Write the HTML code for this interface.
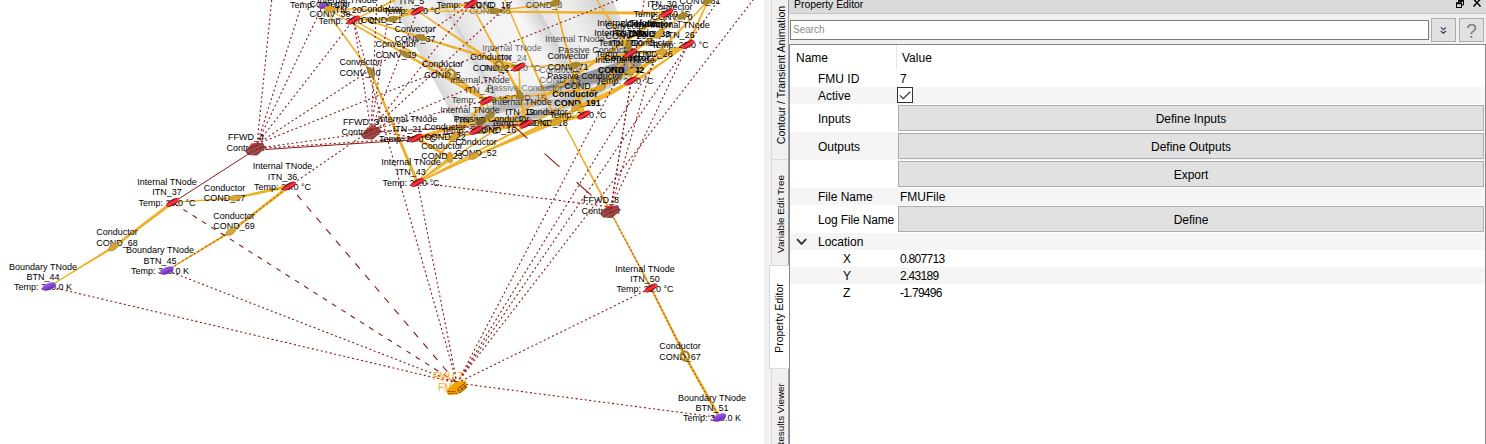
<!DOCTYPE html>
<html><head><meta charset="utf-8">
<style>
html,body{margin:0;padding:0;}
body{width:1486px;height:444px;overflow:hidden;background:#f0f0f0;position:relative;font-family:"Liberation Sans",sans-serif;font-size:12px;color:#000;}
#view{position:absolute;left:0;top:0;width:764px;height:444px;background:#fff;overflow:hidden;}
#view svg{position:absolute;left:0;top:0;}
#tabs{position:absolute;left:764px;top:0;width:25px;height:444px;background:#f0f0f0;}
.tab{position:absolute;left:7px;width:17px;background:#f0f0f0;border-top:1px solid #d9d9d9;border-left:1px solid #d9d9d9;box-sizing:border-box;}
.tab.act{left:5px;width:20px;background:#fff;border:1px solid #d9d9d9;border-right:none;z-index:3;}
.tab span{position:absolute;left:calc(50% - 0.5px);top:50%;white-space:nowrap;transform:translate(-50%,-50%) rotate(-90deg);font-size:10.4px;}
#panel{position:absolute;left:789px;top:0;width:697px;height:444px;background:#f0f0f0;}
#vline{position:absolute;left:788px;top:0;width:1px;height:444px;background:#a0a0a0;}
#title{position:absolute;left:0;top:0;width:697px;height:14px;background:#dadada;border-bottom:1px solid #c4c4c4;box-sizing:border-box;}
#title span{position:absolute;left:5px;top:-1px;font-size:10.4px;}
#search{position:absolute;left:1px;top:20px;width:639px;height:20px;box-sizing:border-box;background:#fff;border:1px solid #7a7a7a;}
#search span{position:absolute;left:2px;top:3px;font-size:10px;color:#8a8a8a;}
.tb{position:absolute;top:18px;width:25px;height:24px;box-sizing:border-box;background:#e1e1e1;border:1px solid #adadad;}
#tree{position:absolute;left:0;top:44px;width:697px;height:400px;background:#fff;border:1px solid #828790;border-bottom:none;box-sizing:border-box;}
.row{position:absolute;left:0;width:695px;}
.row.alt{background:#f5f5f5;}
.row .n{position:absolute;top:50%;transform:translateY(-50%);white-space:nowrap;}
.btn{position:absolute;left:108px;width:586px;box-sizing:border-box;background:#e1e1e1;border:1px solid #adadad;text-align:center;}
</style></head><body>
<div id="view">
<svg width="764" height="444" viewBox="0 0 764 444">
<defs>
<linearGradient id="cy1" x1="0" x2="1" y1="0" y2="0"><stop offset="0" stop-color="#d6d6d6"/><stop offset="0.5" stop-color="#f7f7f7"/><stop offset="0.85" stop-color="#ececec"/><stop offset="1" stop-color="#cdcdcd"/></linearGradient>
<linearGradient id="cy2" x1="0" x2="1" y1="0" y2="0"><stop offset="0" stop-color="#e2e2e2"/><stop offset="0.3" stop-color="#f2f2f2"/><stop offset="0.75" stop-color="#f6f6f6"/><stop offset="1" stop-color="#cfcfcf"/></linearGradient>
<linearGradient id="cy3" x1="0" x2="1" y1="0" y2="0"><stop offset="0" stop-color="#e6e6e6"/><stop offset="0.35" stop-color="#efefef"/><stop offset="0.8" stop-color="#d2d2d2"/><stop offset="1" stop-color="#e4e4e4"/></linearGradient>
<linearGradient id="red" x1="0" x2="0" y1="0" y2="1"><stop offset="0" stop-color="#2a0000"/><stop offset="0.3" stop-color="#e8202c"/><stop offset="0.55" stop-color="#ff3a48"/><stop offset="1" stop-color="#7a0814"/></linearGradient>
<linearGradient id="pur" x1="0" x2="0" y1="0" y2="1"><stop offset="0" stop-color="#a060f0"/><stop offset="1" stop-color="#6a28b0"/></linearGradient>
<clipPath id="cyclip"><path d="M390 -2 L612 -2 L641 68 Q600 97 560 112 Q515 127 476 131.5 L456 122 Z"/></clipPath>
</defs>
<g clip-path="url(#cyclip)"><g transform="matrix(1 0 0.55 1 0 0)">
<rect x="388" y="-5" width="56" height="160" fill="url(#cy1)"/>
<rect x="444" y="-5" width="90" height="160" fill="url(#cy2)"/>
<rect x="534" y="-5" width="80" height="160" fill="url(#cy3)"/>
</g></g>
<path d="M462 116 L545 84 L640 56 L642 68 Q600 97 560 112 Q515 127 476 131.5 L458 123 Z" fill="#c2c2c2" opacity="0.75"/>
<path d="M538 89 L600 68 L640 56 L642 68 L610 80 L570 88 Z" fill="#868686" opacity="0.75"/>
<path d="M478 120 L604 82 L607 89 L482 125 Z" fill="#f4f4f4" opacity="0.8"/>
<path d="M486 108 L560 98 L596 88 L598 94 L560 104 L488 112 Z" fill="#a8a8a8" opacity="0.6"/>
<path d="M470 125 L556 108 L559 113 L476 131 Z" fill="#a4a4a4" opacity="0.6"/>
<path d="M49.3 287.1 L114.1 248.0 L112.9 246.0 L48.7 285.9 Z" fill="#eeb02a"/>
<path d="M114.2 247.9 L173.5 203.8 L171.5 201.2 L112.8 246.1 Z" fill="#eeb02a"/>
<path d="M172.5 203.1 L235.1 199.1 L234.9 196.9 L172.5 201.9 Z" fill="#eeb02a"/>
<path d="M235.2 199.1 L289.8 187.6 L289.2 184.4 L234.8 196.9 Z" fill="#eeb02a"/>
<path d="M167.3 271.1 L231.6 232.5 L230.4 230.5 L166.7 269.9 Z" fill="#eeb02a"/>
<path d="M231.7 232.4 L290.5 187.3 L288.5 184.7 L230.3 230.6 Z" fill="#eeb02a"/>
<path d="M609.4 211.3 L650.1 288.5 L651.9 287.5 L610.6 210.7 Z" fill="#eeb02a"/>
<path d="M650.1 288.4 L683.8 356.6 L686.2 355.4 L651.9 287.6 Z" fill="#eeb02a"/>
<path d="M683.9 356.6 L718.1 418.3 L720.9 416.7 L686.1 355.4 Z" fill="#eeb02a"/>
<path d="M322.0 6.4 L370.2 73.1 L371.8 71.9 L323.0 5.6 Z" fill="#eeb02a"/>
<path d="M370.0 72.9 L416.0 183.1 L419.0 181.9 L372.0 72.1 Z" fill="#eeb02a"/>
<path d="M322.2 6.6 L404.4 55.0 L405.6 53.0 L322.8 5.4 Z" fill="#eeb02a"/>
<path d="M404.4 55.0 L485.7 101.9 L487.3 99.1 L405.6 53.0 Z" fill="#eeb02a"/>
<path d="M322.3 6.6 L420.7 38.6 L421.3 36.4 L322.7 5.4 Z" fill="#eeb02a"/>
<path d="M420.7 38.6 L518.5 68.5 L519.5 65.5 L421.3 36.4 Z" fill="#eeb02a"/>
<path d="M353.5 20.6 L392.5 20.2 L392.5 17.8 L353.5 19.4 Z" fill="#eeb02a"/>
<path d="M392.9 20.2 L418.0 12.5 L417.0 9.5 L392.1 17.8 Z" fill="#eeb02a"/>
<path d="M322.3 6.6 L329.2 9.5 L329.8 8.1 L322.7 5.4 Z" fill="#eeb02a"/>
<path d="M329.5 9.5 L417.5 12.6 L417.5 9.4 L329.5 8.1 Z" fill="#eeb02a"/>
<path d="M353.2 20.6 L450.4 75.2 L451.6 72.8 L353.8 19.4 Z" fill="#eeb02a"/>
<path d="M450.2 75.1 L485.5 101.8 L487.5 99.2 L451.8 72.9 Z" fill="#eeb02a"/>
<path d="M417.1 11.5 L498.2 67.2 L499.8 64.8 L417.9 10.5 Z" fill="#eeb02a"/>
<path d="M498.9 67.4 L518.9 68.6 L519.1 65.4 L499.1 64.6 Z" fill="#eeb02a"/>
<path d="M417.5 11.6 L632.0 14.5 L632.0 11.5 L417.5 10.4 Z" fill="#eeb02a"/>
<path d="M632.0 14.5 L667.0 14.6 L667.0 11.4 L632.0 11.5 Z" fill="#eeb02a"/>
<path d="M470.8 4.6 L494.8 11.7 L495.2 10.3 L471.2 3.4 Z" fill="#eeb02a"/>
<path d="M495.1 11.7 L555.1 4.0 L554.9 2.0 L494.9 10.3 Z" fill="#eeb02a"/>
<path d="M417.6 11.6 L471.2 5.6 L470.8 2.4 L417.4 10.4 Z" fill="#eeb02a"/>
<path d="M470.4 4.3 L518.8 95.7 L521.2 94.3 L471.6 3.7 Z" fill="#eeb02a"/>
<path d="M518.6 95.3 L524.4 124.3 L527.6 123.7 L521.4 94.7 Z" fill="#eeb02a"/>
<path d="M554.4 3.2 L582.5 115.4 L585.5 114.6 L555.6 2.8 Z" fill="#eeb02a"/>
<path d="M596.5 0.3 L629.1 53.9 L631.9 52.1 L597.5 -0.3 Z" fill="#eeb02a"/>
<path d="M707.5 0.5 L629.8 79.9 L632.2 82.1 L708.5 1.5 Z" fill="#eeb02a"/>
<path d="M682.1 15.5 L629.6 51.7 L631.4 54.3 L682.9 16.5 Z" fill="#eeb02a"/>
<path d="M687.8 43.9 L660.7 50.9 L661.3 53.1 L688.2 45.1 Z" fill="#eeb02a"/>
<path d="M661.0 50.9 L630.4 51.4 L630.6 54.6 L661.0 53.1 Z" fill="#eeb02a"/>
<path d="M687.6 44.0 L639.2 76.8 L640.8 79.2 L688.4 45.0 Z" fill="#eeb02a"/>
<path d="M639.5 76.6 L630.5 79.5 L631.5 82.5 L640.5 79.4 Z" fill="#eeb02a"/>
<path d="M630.7 80.4 L575.4 106.2 L576.6 108.8 L631.3 81.6 Z" fill="#eeb02a"/>
<path d="M575.0 108.6 L582.9 116.2 L585.1 113.8 L577.0 106.4 Z" fill="#eeb02a"/>
<path d="M519.0 67.6 L575.5 66.1 L575.5 63.9 L519.0 66.4 Z" fill="#eeb02a"/>
<path d="M575.7 66.1 L630.8 54.6 L630.2 51.4 L575.3 63.9 Z" fill="#eeb02a"/>
<path d="M486.6 101.1 L600.1 89.3 L599.9 86.7 L486.4 99.9 Z" fill="#eeb02a"/>
<path d="M601.0 88.9 L631.7 54.1 L629.3 51.9 L599.0 87.1 Z" fill="#eeb02a"/>
<path d="M485.9 100.6 L488.7 116.2 L490.3 115.8 L487.1 100.4 Z" fill="#eeb02a"/>
<path d="M489.3 115.2 L415.5 136.5 L416.5 139.5 L489.7 116.8 Z" fill="#eeb02a"/>
<path d="M417.9 183.0 L450.7 158.4 L449.3 156.6 L417.1 182.0 Z" fill="#eeb02a"/>
<path d="M450.6 156.5 L416.8 136.6 L415.2 139.4 L449.4 158.5 Z" fill="#eeb02a"/>
<path d="M417.8 183.1 L474.4 156.9 L473.6 155.1 L417.2 181.9 Z" fill="#eeb02a"/>
<path d="M474.4 156.9 L556.5 123.8 L555.5 121.2 L473.6 155.1 Z" fill="#eeb02a"/>
<path d="M556.4 123.9 L584.4 116.5 L583.6 113.5 L555.6 121.1 Z" fill="#eeb02a"/>
<path d="M417.8 183.1 L610.6 95.4 L609.4 92.6 L417.2 181.9 Z" fill="#eeb02a"/>
<path d="M610.8 95.3 L631.8 82.4 L630.2 79.6 L609.2 92.7 Z" fill="#eeb02a"/>
<path d="M418.0 182.9 L454.9 137.7 L453.1 136.3 L417.0 182.1 Z" fill="#eeb02a"/>
<path d="M454.9 137.8 L487.7 101.6 L485.3 99.4 L453.1 136.2 Z" fill="#eeb02a"/>
<path d="M526.0 124.6 L556.0 123.5 L556.0 121.5 L526.0 123.4 Z" fill="#eeb02a"/>
<path d="M561.4 120.3 L609.1 211.5 L610.9 210.5 L562.6 119.7 Z" fill="#eeb02a"/>
<path d="M416.0 138.6 L454.0 138.0 L454.0 136.0 L416.0 137.4 Z" fill="#eeb02a"/>
<path d="M454.2 138.0 L526.3 125.6 L525.7 122.4 L453.8 136.0 Z" fill="#eeb02a"/>
<path d="M666.9 13.6 L682.3 17.0 L682.7 15.0 L667.1 12.4 Z" fill="#eeb02a"/>
<path d="M417.9 183.0 L667.9 14.3 L666.1 11.7 L417.1 182.0 Z" fill="#eeb02a"/>
<path d="M417.8 183.1 L632.6 72.2 L631.4 69.8 L417.2 181.9 Z" fill="#eeb02a"/>
<path d="M632.6 72.3 L688.7 45.9 L687.3 43.1 L631.4 69.7 Z" fill="#eeb02a"/>
<path d="M666.4 12.8 L658.0 33.6 L660.0 34.4 L667.6 13.2 Z" fill="#eeb02a"/>
<path d="M658.4 33.1 L629.6 51.7 L631.4 54.3 L659.6 34.9 Z" fill="#eeb02a"/>
<path d="M707.4 0.7 L688.6 39.4 L691.4 40.6 L708.6 1.3 Z" fill="#eeb02a"/>
<path d="M688.6 39.4 L686.5 43.9 L689.5 45.1 L691.4 40.6 Z" fill="#eeb02a"/>
<path d="M631.6 81.1 L632.8 71.1 L631.2 70.9 L630.4 80.9 Z" fill="#eeb02a"/>
<path d="M632.3 71.7 L688.7 45.9 L687.3 43.1 L631.7 70.3 Z" fill="#eeb02a"/>
<path d="M353.8 20.6 L395.4 0.9 L394.6 -0.9 L353.2 19.4 Z" fill="#eeb02a"/>
<path d="M518.4 67.0 L518.9 95.0 L521.1 95.0 L519.6 67.0 Z" fill="#eeb02a"/>
<path d="M519.8 93.9 L486.2 98.9 L486.8 102.1 L520.2 96.1 Z" fill="#eeb02a"/>
<path d="M526.1 124.6 L584.2 116.6 L583.8 113.4 L525.9 123.4 Z" fill="#eeb02a"/>
<path d="M631.1 52.8 L629.3 45.8 L627.7 46.2 L629.9 53.2 Z" fill="#eeb02a"/>
<path d="M627.7 46.1 L629.4 81.1 L632.6 80.9 L629.3 45.9 Z" fill="#eeb02a"/>
<path d="M504.4 0.3 L551.1 111.4 L552.9 110.6 L505.6 -0.3 Z" fill="#eeb02a"/>
<path d="M551.1 111.3 L555.1 122.8 L556.9 122.2 L552.9 110.7 Z" fill="#eeb02a"/>
<path d="M416.2 138.6 L500.3 119.3 L499.7 116.7 L415.8 137.4 Z" fill="#eeb02a"/>
<path d="M499.7 119.3 L525.6 125.6 L526.4 122.4 L500.3 116.7 Z" fill="#eeb02a"/>
<line x1="457" y1="383" x2="49" y2="286.5" stroke="#8e1616" stroke-width="1.1" stroke-dasharray="2 2.6"/>
<line x1="457" y1="383" x2="167" y2="270.5" stroke="#8e1616" stroke-width="1.1" stroke-dasharray="2 2.6"/>
<line x1="457" y1="383" x2="417.5" y2="182.5" stroke="#8e1616" stroke-width="1.1" stroke-dasharray="2 2.6"/>
<line x1="457" y1="383" x2="353.5" y2="20" stroke="#8e1616" stroke-width="1.1" stroke-dasharray="2 2.6"/>
<line x1="457" y1="383" x2="630.5" y2="53" stroke="#8e1616" stroke-width="1.1" stroke-dasharray="2 2.6"/>
<line x1="457" y1="383" x2="651" y2="288" stroke="#8e1616" stroke-width="1.1" stroke-dasharray="2 2.6"/>
<line x1="457" y1="383" x2="719.5" y2="417.5" stroke="#8e1616" stroke-width="1.1" stroke-dasharray="2 2.6"/>
<line x1="457" y1="383" x2="661" y2="52" stroke="#8e1616" stroke-width="1.1" stroke-dasharray="2 2.6"/>
<line x1="457" y1="383" x2="760" y2="-9" stroke="#8e1616" stroke-width="1.1" stroke-dasharray="2 2.6"/>
<line x1="457" y1="383" x2="724.5" y2="-9" stroke="#8e1616" stroke-width="1.1" stroke-dasharray="2 2.6"/>
<line x1="457" y1="383" x2="172.5" y2="202.5" stroke="#8e1616" stroke-width="1.1" stroke-dasharray="5 6"/>
<line x1="457" y1="383" x2="289.5" y2="186" stroke="#8e1616" stroke-width="1.1" stroke-dasharray="7 8"/>
<line x1="611" y1="207" x2="631" y2="81" stroke="#8e1616" stroke-width="1.1" stroke-dasharray="2 2.6"/>
<line x1="611" y1="207" x2="667" y2="13" stroke="#8e1616" stroke-width="1.1" stroke-dasharray="2 2.6"/>
<line x1="611" y1="207" x2="688" y2="44.5" stroke="#8e1616" stroke-width="1.1" stroke-dasharray="2 2.6"/>
<line x1="611" y1="207" x2="417.5" y2="182.5" stroke="#8e1616" stroke-width="1.1" stroke-dasharray="2 2.6"/>
<line x1="611" y1="207" x2="645" y2="-5" stroke="#8e1616" stroke-width="1.1" stroke-dasharray="2 2.6"/>
<line x1="512.5" y1="125" x2="601" y2="204" stroke="#8e1616" stroke-width="1.1" stroke-dasharray="20 23"/>
<line x1="610" y1="211" x2="651" y2="288" stroke="#8e1616" stroke-width="0.9" stroke-dasharray="1.5 2.5"/>
<line x1="651" y1="288" x2="685" y2="356" stroke="#8e1616" stroke-width="0.9" stroke-dasharray="1.5 2.5"/>
<line x1="685" y1="356" x2="719.5" y2="417.5" stroke="#8e1616" stroke-width="0.9" stroke-dasharray="1.5 2.5"/>
<line x1="167" y1="270.5" x2="231" y2="231.5" stroke="#8e1616" stroke-width="0.9" stroke-dasharray="1.5 3"/>
<line x1="231" y1="231.5" x2="289.5" y2="186" stroke="#8e1616" stroke-width="0.9" stroke-dasharray="1.5 3"/>
<line x1="257" y1="144" x2="272" y2="-3" stroke="#8e1616" stroke-width="1.1" stroke-dasharray="2 2.6"/>
<line x1="257" y1="144" x2="304" y2="-3" stroke="#8e1616" stroke-width="1.1" stroke-dasharray="2 2.6"/>
<line x1="257" y1="144" x2="322.5" y2="6" stroke="#8e1616" stroke-width="1.1" stroke-dasharray="2 2.6"/>
<line x1="257" y1="144" x2="353.5" y2="20" stroke="#8e1616" stroke-width="1.1" stroke-dasharray="2 2.6"/>
<line x1="257" y1="144" x2="471" y2="4" stroke="#8e1616" stroke-width="1.1" stroke-dasharray="2 2.6"/>
<line x1="257" y1="144" x2="625" y2="-3" stroke="#8e1616" stroke-width="1.1" stroke-dasharray="2 2.6"/>
<line x1="265" y1="148" x2="416" y2="138" stroke="#8e1616" stroke-width="1.1" stroke-dasharray="2 2.6"/>
<line x1="265" y1="149.5" x2="410" y2="140" stroke="#8e1616" stroke-width="1"/>
<line x1="250" y1="153" x2="177" y2="200" stroke="#8e1616" stroke-width="1"/>
<line x1="371" y1="130" x2="289.5" y2="186" stroke="#8e1616" stroke-width="1.1" stroke-dasharray="2 2.6"/>
<line x1="371" y1="130" x2="471" y2="4" stroke="#8e1616" stroke-width="1.1" stroke-dasharray="2 2.6"/>
<line x1="371" y1="130" x2="391" y2="-3" stroke="#8e1616" stroke-width="1.1" stroke-dasharray="2 2.6"/>
<line x1="371" y1="130" x2="377" y2="-3" stroke="#8e1616" stroke-width="1.1" stroke-dasharray="2 2.6"/>
<line x1="371" y1="130" x2="353.5" y2="20" stroke="#8e1616" stroke-width="1.1" stroke-dasharray="2 2.6"/>
<line x1="371" y1="130" x2="417.5" y2="11" stroke="#8e1616" stroke-width="1.1" stroke-dasharray="2 2.6"/>
<line x1="371" y1="130" x2="486.5" y2="100.5" stroke="#8e1616" stroke-width="1.1" stroke-dasharray="2 2.6"/>
<line x1="371" y1="130" x2="519" y2="67" stroke="#8e1616" stroke-width="1.1" stroke-dasharray="2 2.6"/>
<line x1="371" y1="130" x2="517" y2="-3" stroke="#8e1616" stroke-width="1.1" stroke-dasharray="2 2.6"/>
<line x1="371" y1="130" x2="416" y2="138" stroke="#8e1616" stroke-width="1.1" stroke-dasharray="2 2.6"/>
<line x1="371" y1="132.5" x2="255" y2="148.5" stroke="#8e1616" stroke-width="1.1" stroke-dasharray="2 2.6"/>
<line x1="380" y1="131.5" x2="526" y2="124" stroke="#8e1616" stroke-width="1.1" stroke-dasharray="5 2"/>
<line x1="380" y1="140.5" x2="476" y2="131" stroke="#8e1616" stroke-width="1.1" stroke-dasharray="5 2"/>
<line x1="416" y1="138" x2="526" y2="124" stroke="#8e1616" stroke-width="1.1" stroke-dasharray="2 2.6"/>
<g font-family="Liberation Sans, sans-serif" font-size="9px">
<text x="43" y="269.5" text-anchor="middle" fill="#000">Boundary TNode</text>
<text x="43" y="279.8" text-anchor="middle" fill="#000">BTN_44</text>
<text x="43" y="290.1" text-anchor="middle" fill="#000">Temp: 300.0 K</text>
<text x="160" y="253.2" text-anchor="middle" fill="#000">Boundary TNode</text>
<text x="160" y="263.5" text-anchor="middle" fill="#000">BTN_45</text>
<text x="160" y="273.8" text-anchor="middle" fill="#000">Temp: 300.0 K</text>
<text x="712" y="400.5" text-anchor="middle" fill="#000">Boundary TNode</text>
<text x="712" y="410.8" text-anchor="middle" fill="#000">BTN_51</text>
<text x="712" y="421.1" text-anchor="middle" fill="#000">Temp: 300.0 K</text>
<text x="167" y="185.0" text-anchor="middle" fill="#000">Internal TNode</text>
<text x="167" y="195.3" text-anchor="middle" fill="#000">ITN_37</text>
<text x="167" y="205.6" text-anchor="middle" fill="#000">Temp: 20.0 °C</text>
<text x="282.5" y="169.2" text-anchor="middle" fill="#000">Internal TNode</text>
<text x="282.5" y="179.5" text-anchor="middle" fill="#000">ITN_36</text>
<text x="282.5" y="189.8" text-anchor="middle" fill="#000">Temp: 20.0 °C</text>
<text x="411" y="165.0" text-anchor="middle" fill="#000">Internal TNode</text>
<text x="411" y="175.3" text-anchor="middle" fill="#000">ITN_43</text>
<text x="411" y="185.6" text-anchor="middle" fill="#000">Temp: 20.0 °C</text>
<text x="407.5" y="121.5" text-anchor="middle" fill="#000">Internal TNode</text>
<text x="407.5" y="131.8" text-anchor="middle" fill="#000">ITN_21</text>
<text x="407.5" y="142.1" text-anchor="middle" fill="#000">Temp: 20.0 °C</text>
<text x="645" y="271.5" text-anchor="middle" fill="#000">Internal TNode</text>
<text x="645" y="281.8" text-anchor="middle" fill="#000">ITN_50</text>
<text x="645" y="292.1" text-anchor="middle" fill="#000">Temp: 20.0 °C</text>
<text x="117" y="235.3" text-anchor="middle" fill="#000">Conductor</text>
<text x="117" y="245.6" text-anchor="middle" fill="#000">COND_68</text>
<text x="224.5" y="190.8" text-anchor="middle" fill="#000">Conductor</text>
<text x="224.5" y="201.1" text-anchor="middle" fill="#000">COND_67</text>
<text x="234" y="218.8" text-anchor="middle" fill="#000">Conductor</text>
<text x="234" y="229.1" text-anchor="middle" fill="#000">COND_69</text>
<text x="680" y="349.3" text-anchor="middle" fill="#000">Conductor</text>
<text x="680" y="359.6" text-anchor="middle" fill="#000">COND_67</text>
<text x="246" y="140.3" text-anchor="middle" fill="#000">FFWD_4</text>
<text x="246" y="150.6" text-anchor="middle" fill="#000">Controller</text>
<text x="361" y="124.8" text-anchor="middle" fill="#000">FFWD_3</text>
<text x="361" y="135.1" text-anchor="middle" fill="#000">Controller</text>
<text x="601" y="203.3" text-anchor="middle" fill="#000">FFWD_8</text>
<text x="601" y="213.6" text-anchor="middle" fill="#000">Controller</text>
<text x="347" y="3.0" text-anchor="middle" fill="#000">Internal TNode</text>
<text x="347" y="13.3" text-anchor="middle" fill="#000">ITN_20</text>
<text x="347" y="23.6" text-anchor="middle" fill="#000">Temp: 20.0 °C</text>
<text x="319" y="-13.0" text-anchor="middle" fill="#000">Boundary TNode</text>
<text x="319" y="-2.7" text-anchor="middle" fill="#000">BTN_1</text>
<text x="319" y="7.6" text-anchor="middle" fill="#000">Temp: 300.0 K</text>
<text x="330" y="6.8" text-anchor="middle" fill="#000">Convector</text>
<text x="330" y="17.1" text-anchor="middle" fill="#000">CONV_38</text>
<text x="381.5" y="12.3" text-anchor="middle" fill="#000">Conductor</text>
<text x="381.5" y="22.6" text-anchor="middle" fill="#000">COND_21</text>
<text x="412" y="-6.5" text-anchor="middle" fill="#000">Internal TNode</text>
<text x="412" y="3.8" text-anchor="middle" fill="#000">ITN_5</text>
<text x="412" y="14.1" text-anchor="middle" fill="#000">Temp: 20.0 °C</text>
<text x="465" y="-13.0" text-anchor="middle" fill="#000">Internal TNode</text>
<text x="465" y="-2.7" text-anchor="middle" fill="#000">ITN_6</text>
<text x="465" y="7.6" text-anchor="middle" fill="#000">Temp: 20.0 °C</text>
<text x="490" y="-2.7" text-anchor="middle" fill="#000">Conductor</text>
<text x="490" y="7.6" text-anchor="middle" fill="#000">COND_18</text>
<text x="490" y="14.1" text-anchor="middle" fill="#000" opacity="0.55">COND_65</text>
<text x="544" y="-2.7" text-anchor="middle" fill="#000" opacity="0.75">Conductor</text>
<text x="544" y="7.6" text-anchor="middle" fill="#000" opacity="0.75">COND_8</text>
<text x="415" y="31.8" text-anchor="middle" fill="#000">Convector</text>
<text x="415" y="42.1" text-anchor="middle" fill="#000">CONV_37</text>
<text x="396" y="47.3" text-anchor="middle" fill="#000">Convector</text>
<text x="396" y="57.6" text-anchor="middle" fill="#000">CONV_39</text>
<text x="360" y="65.3" text-anchor="middle" fill="#000">Convector</text>
<text x="360" y="75.6" text-anchor="middle" fill="#000">CONV_40</text>
<text x="442.5" y="67.3" text-anchor="middle" fill="#000">Conductor</text>
<text x="442.5" y="77.6" text-anchor="middle" fill="#000">COND_5</text>
<text x="491" y="60.3" text-anchor="middle" fill="#000">Conductor</text>
<text x="491" y="70.6" text-anchor="middle" fill="#000">COND_2</text>
<text x="512" y="50.5" text-anchor="middle" fill="#000" opacity="0.6">Internal TNode</text>
<text x="512" y="60.8" text-anchor="middle" fill="#000" opacity="0.6">ITN_24</text>
<text x="512" y="71.1" text-anchor="middle" fill="#000" opacity="0.6">Temp: 20.0 °C</text>
<text x="480" y="82.5" text-anchor="middle" fill="#000" opacity="0.8">Internal TNode</text>
<text x="480" y="92.8" text-anchor="middle" fill="#000" opacity="0.8">ITN_41</text>
<text x="480" y="103.1" text-anchor="middle" fill="#000" opacity="0.8">Temp: 20.0 °C</text>
<text x="560" y="72.8" text-anchor="middle" fill="#000" opacity="0.6">Conductor</text>
<text x="560" y="83.1" text-anchor="middle" fill="#000" opacity="0.6">COND_15</text>
<text x="525" y="90.8" text-anchor="middle" fill="#000" opacity="0.55">Passive Conductor</text>
<text x="525" y="101.1" text-anchor="middle" fill="#000" opacity="0.55">COND_15</text>
<text x="575" y="42.1" text-anchor="middle" fill="#000" opacity="0.7">Internal TNode</text>
<text x="568" y="59.4" text-anchor="middle" fill="#000">Convector</text>
<text x="568" y="69.7" text-anchor="middle" fill="#000">CONV_71</text>
<text x="596" y="52.6" text-anchor="middle" fill="#000" opacity="0.8">Passive Conductor</text>
<text x="627" y="61.1" text-anchor="middle" fill="#000" font-weight="bold">Conductor</text>
<text x="649.5" y="26.6" text-anchor="middle" fill="#000" font-weight="bold">Conductor</text>
<text x="649.5" y="36.9" text-anchor="middle" fill="#000" font-weight="bold">COND_33</text>
<text x="627" y="25.5" text-anchor="middle" fill="#000">Internal TNode</text>
<text x="627" y="35.8" text-anchor="middle" fill="#000">ITN_27</text>
<text x="627" y="46.1" text-anchor="middle" fill="#000">Temp: 20.0 °C</text>
<text x="621" y="73.1" text-anchor="middle" fill="#000" font-weight="bold">COND_142</text>
<text x="585" y="78.8" text-anchor="middle" fill="#000">Passive Conductor</text>
<text x="585" y="88.6" text-anchor="middle" fill="#000">COND_13</text>
<text x="575" y="97.1" text-anchor="middle" fill="#000" font-weight="bold">Conductor</text>
<text x="577.5" y="106.1" text-anchor="middle" fill="#000" font-weight="bold">COND_191</text>
<text x="625" y="63.0" text-anchor="middle" fill="#000">Internal TNode</text>
<text x="625" y="73.3" text-anchor="middle" fill="#000">ITN_28</text>
<text x="625" y="83.6" text-anchor="middle" fill="#000">Temp: 20.0 °C</text>
<text x="522" y="105.1" text-anchor="middle" fill="#000" opacity="0.8">Internal TNode</text>
<text x="520" y="115.3" text-anchor="middle" fill="#000">ITN_19</text>
<text x="520" y="125.6" text-anchor="middle" fill="#000">Temp: 20.0 °C</text>
<text x="547" y="115.3" text-anchor="middle" fill="#000">Conductor</text>
<text x="547" y="125.6" text-anchor="middle" fill="#000">COND_18</text>
<text x="578" y="118.1" text-anchor="middle" fill="#000">Temp: 20.0 °C</text>
<text x="491.5" y="122.1" text-anchor="middle" fill="#000">Passive Conductor</text>
<text x="495.5" y="133.1" text-anchor="middle" fill="#000">COND_16</text>
<text x="470" y="113.0" text-anchor="middle" fill="#000" opacity="0.85">Internal TNode</text>
<text x="470" y="123.3" text-anchor="middle" fill="#000" opacity="0.85">ITN_17</text>
<text x="470" y="133.6" text-anchor="middle" fill="#000" opacity="0.85">Temp: 20.0 °C</text>
<text x="445" y="129.8" text-anchor="middle" fill="#000">Conductor</text>
<text x="445" y="140.1" text-anchor="middle" fill="#000">COND_22</text>
<text x="442" y="148.8" text-anchor="middle" fill="#000">Conductor</text>
<text x="442" y="159.1" text-anchor="middle" fill="#000">COND_23</text>
<text x="476" y="145.3" text-anchor="middle" fill="#000">Conductor</text>
<text x="476" y="155.6" text-anchor="middle" fill="#000">COND_52</text>
<text x="662" y="-3.5" text-anchor="middle" fill="#000">Internal TNode</text>
<text x="662" y="6.8" text-anchor="middle" fill="#000">ITN_30</text>
<text x="662" y="17.1" text-anchor="middle" fill="#000">Temp: 20.0 °C</text>
<text x="672" y="9.8" text-anchor="middle" fill="#000">Convector</text>
<text x="672" y="20.1" text-anchor="middle" fill="#000">CONV_70</text>
<text x="700" y="-6.2" text-anchor="middle" fill="#000">Convector</text>
<text x="700" y="4.1" text-anchor="middle" fill="#000">CONV_31</text>
<text x="680" y="27.5" text-anchor="middle" fill="#000">Internal TNode</text>
<text x="680" y="37.8" text-anchor="middle" fill="#000">ITN_26</text>
<text x="680" y="48.1" text-anchor="middle" fill="#000">Temp: 20.0 °C</text>
<text x="652" y="46.3" text-anchor="middle" fill="#000">Conductor</text>
<text x="652" y="56.6" text-anchor="middle" fill="#000">COND_26</text>
<text x="641" y="26.8" text-anchor="middle" fill="#000">Conductor</text>
<text x="641" y="37.1" text-anchor="middle" fill="#000">COND_35</text>
<text x="626" y="28.8" text-anchor="middle" fill="#000">Convector</text>
<text x="626" y="39.1" text-anchor="middle" fill="#000">CONV_29</text>
<text x="624" y="36.0" text-anchor="middle" fill="#000">Internal TNode</text>
<text x="624" y="46.3" text-anchor="middle" fill="#000">ITN_29</text>
<text x="624" y="56.6" text-anchor="middle" fill="#000">Temp: 20.0 °C</text>
</g>
<g font-family="Liberation Sans, sans-serif" font-size="10px" fill="#ffa61a">
<text x="448" y="379.5" text-anchor="middle">FMU 7</text>
<text x="438" y="391">FM</text>
</g>
<ellipse cx="49" cy="286.5" rx="7.2" ry="3.4" fill="url(#pur)" transform="rotate(-22 49 286.5)"/>
<ellipse cx="167" cy="270.5" rx="7.2" ry="3.4" fill="url(#pur)" transform="rotate(-22 167 270.5)"/>
<ellipse cx="719.5" cy="417.5" rx="7.2" ry="3.4" fill="url(#pur)" transform="rotate(-22 719.5 417.5)"/>
<ellipse cx="322.5" cy="6" rx="4.2" ry="2.6" fill="url(#pur)" transform="rotate(-22 322.5 6)"/>
<ellipse cx="172.5" cy="202.5" rx="7.4" ry="3" fill="url(#red)" transform="rotate(-30 172.5 202.5)"/>
<ellipse cx="289.5" cy="186" rx="7.4" ry="3" fill="url(#red)" transform="rotate(-30 289.5 186)"/>
<ellipse cx="417.5" cy="182.5" rx="7.4" ry="3" fill="url(#red)" transform="rotate(-30 417.5 182.5)"/>
<ellipse cx="416" cy="138" rx="7.4" ry="3" fill="url(#red)" transform="rotate(-30 416 138)"/>
<ellipse cx="651" cy="288" rx="7.4" ry="3" fill="url(#red)" transform="rotate(-30 651 288)"/>
<ellipse cx="353.5" cy="20" rx="7.4" ry="3" fill="url(#red)" transform="rotate(-30 353.5 20)"/>
<ellipse cx="417.5" cy="11" rx="7.4" ry="3" fill="url(#red)" transform="rotate(-30 417.5 11)"/>
<ellipse cx="471" cy="4" rx="7.4" ry="3" fill="url(#red)" transform="rotate(-30 471 4)"/>
<ellipse cx="519" cy="67" rx="7.4" ry="3" fill="url(#red)" transform="rotate(-30 519 67)"/>
<ellipse cx="486.5" cy="100.5" rx="7.4" ry="3" fill="url(#red)" transform="rotate(-30 486.5 100.5)"/>
<ellipse cx="526" cy="124" rx="7.4" ry="3" fill="url(#red)" transform="rotate(-30 526 124)"/>
<ellipse cx="476" cy="130.5" rx="7.4" ry="3" fill="url(#red)" transform="rotate(-30 476 130.5)"/>
<ellipse cx="584" cy="115" rx="7.4" ry="3" fill="url(#red)" transform="rotate(-30 584 115)"/>
<ellipse cx="631" cy="81" rx="7.4" ry="3" fill="url(#red)" transform="rotate(-30 631 81)"/>
<ellipse cx="630.5" cy="53" rx="7.4" ry="3" fill="url(#red)" transform="rotate(-30 630.5 53)"/>
<ellipse cx="688" cy="44.5" rx="7.4" ry="3" fill="url(#red)" transform="rotate(-30 688 44.5)"/>
<ellipse cx="667" cy="13" rx="7.4" ry="3" fill="url(#red)" transform="rotate(-30 667 13)"/>
<g transform="translate(255 148.5)"><path d="M-10.2 2.5 L-7 6.6 L2 7 L10.5 -0.5 L8 -5.8 L-3 -4.8 Z" fill="#863232" opacity="0.93"/><path d="M-8 3.4 L8.5 -3.4 M-5 6.2 L10 -0.6" stroke="#cf5c5c" stroke-width="0.7" fill="none"/><path d="M-4.5 -4.2 L2.5 -5" stroke="#ff2828" stroke-width="1.3"/></g>
<g transform="translate(371 132.5)"><path d="M-10.2 2.5 L-7 6.6 L2 7 L10.5 -0.5 L8 -5.8 L-3 -4.8 Z" fill="#863232" opacity="0.93"/><path d="M-8 3.4 L8.5 -3.4 M-5 6.2 L10 -0.6" stroke="#cf5c5c" stroke-width="0.7" fill="none"/><path d="M-4.5 -4.2 L2.5 -5" stroke="#ff2828" stroke-width="1.3"/></g>
<g transform="translate(610 211)"><path d="M-10.2 2.5 L-7 6.6 L2 7 L10.5 -0.5 L8 -5.8 L-3 -4.8 Z" fill="#863232" opacity="0.93"/><path d="M-8 3.4 L8.5 -3.4 M-5 6.2 L10 -0.6" stroke="#cf5c5c" stroke-width="0.7" fill="none"/><path d="M-4.5 -4.2 L2.5 -5" stroke="#ff2828" stroke-width="1.3"/></g>
<ellipse cx="329.5" cy="8.8" rx="5.6" ry="2.9" fill="#dba630" stroke="#8f6f1e" stroke-opacity="0.55" stroke-width="0.8" transform="rotate(3 329.5 8.8)"/>
<ellipse cx="113.5" cy="247" rx="5.6" ry="2.9" fill="#dba630" stroke="#8f6f1e" stroke-opacity="0.55" stroke-width="0.8" transform="rotate(-34 113.5 247)"/>
<ellipse cx="235" cy="198" rx="5.6" ry="2.9" fill="#dba630" stroke="#8f6f1e" stroke-opacity="0.55" stroke-width="0.8" transform="rotate(-8 235 198)"/>
<ellipse cx="231" cy="231.5" rx="5.6" ry="2.9" fill="#dba630" stroke="#8f6f1e" stroke-opacity="0.55" stroke-width="0.8" transform="rotate(-35 231 231.5)"/>
<ellipse cx="454" cy="137" rx="5.6" ry="2.9" fill="#dba630" stroke="#8f6f1e" stroke-opacity="0.55" stroke-width="0.8" transform="rotate(-50 454 137)"/>
<ellipse cx="450" cy="157.5" rx="5.6" ry="2.9" fill="#dba630" stroke="#8f6f1e" stroke-opacity="0.55" stroke-width="0.8" transform="rotate(-92 450 157.5)"/>
<ellipse cx="474" cy="156" rx="5.6" ry="2.9" fill="#dba630" stroke="#8f6f1e" stroke-opacity="0.55" stroke-width="0.8" transform="rotate(-23 474 156)"/>
<ellipse cx="556" cy="122.5" rx="5.6" ry="2.9" fill="#dba630" stroke="#8f6f1e" stroke-opacity="0.55" stroke-width="0.8" transform="rotate(-20 556 122.5)"/>
<ellipse cx="576" cy="107.5" rx="5.6" ry="2.9" fill="#dba630" stroke="#8f6f1e" stroke-opacity="0.55" stroke-width="0.8" transform="rotate(144 576 107.5)"/>
<ellipse cx="632" cy="71" rx="5.6" ry="2.9" fill="#dba630" stroke="#8f6f1e" stroke-opacity="0.55" stroke-width="0.8" transform="rotate(-27 632 71)"/>
<ellipse cx="661" cy="52" rx="5.6" ry="2.9" fill="#dba630" stroke="#8f6f1e" stroke-opacity="0.55" stroke-width="0.8" transform="rotate(172 661 52)"/>
<ellipse cx="659" cy="34" rx="5.6" ry="2.9" fill="#dba630" stroke="#8f6f1e" stroke-opacity="0.55" stroke-width="0.8" transform="rotate(132 659 34)"/>
<ellipse cx="600" cy="88" rx="5.6" ry="2.9" fill="#dba630" stroke="#8f6f1e" stroke-opacity="0.55" stroke-width="0.8" transform="rotate(-18 600 88)"/>
<ellipse cx="392.5" cy="19" rx="5.6" ry="2.9" fill="#a8862a" stroke="#8f6f1e" stroke-opacity="0.55" stroke-width="0.8" transform="rotate(-8 392.5 19)"/>
<ellipse cx="421" cy="37.5" rx="5.6" ry="2.9" fill="#a8862a" stroke="#8f6f1e" stroke-opacity="0.55" stroke-width="0.8" transform="rotate(17 421 37.5)"/>
<ellipse cx="405" cy="54" rx="5.6" ry="2.9" fill="#a8862a" stroke="#8f6f1e" stroke-opacity="0.55" stroke-width="0.8" transform="rotate(30 405 54)"/>
<ellipse cx="371" cy="72.5" rx="5.6" ry="2.9" fill="#a8862a" stroke="#8f6f1e" stroke-opacity="0.55" stroke-width="0.8" transform="rotate(62 371 72.5)"/>
<ellipse cx="495" cy="11" rx="5.6" ry="2.9" fill="#a8862a" stroke="#8f6f1e" stroke-opacity="0.55" stroke-width="0.8" transform="rotate(-1 495 11)"/>
<ellipse cx="555" cy="3" rx="5.6" ry="2.9" fill="#a8862a" stroke="#8f6f1e" stroke-opacity="0.55" stroke-width="0.8" transform="rotate(-25 555 3)"/>
<ellipse cx="575.5" cy="65" rx="5.6" ry="2.9" fill="#a8862a" stroke="#8f6f1e" stroke-opacity="0.55" stroke-width="0.8" transform="rotate(-7 575.5 65)"/>
<ellipse cx="682.5" cy="16" rx="5.6" ry="2.9" fill="#a8862a" stroke="#8f6f1e" stroke-opacity="0.55" stroke-width="0.8" transform="rotate(-25 682.5 16)"/>
<ellipse cx="708" cy="1" rx="5.6" ry="2.9" fill="#a8862a" stroke="#8f6f1e" stroke-opacity="0.55" stroke-width="0.8" transform="rotate(-25 708 1)"/>
<ellipse cx="628.5" cy="46" rx="5.6" ry="2.9" fill="#a8862a" stroke="#8f6f1e" stroke-opacity="0.55" stroke-width="0.8" transform="rotate(89 628.5 46)"/>
<ellipse cx="489.5" cy="116" rx="5.6" ry="2.9" fill="#a8862a" stroke="#8f6f1e" stroke-opacity="0.55" stroke-width="0.8" transform="rotate(152 489.5 116)"/>
<ellipse cx="520" cy="95" rx="5.6" ry="2.9" fill="#a8862a" stroke="#8f6f1e" stroke-opacity="0.55" stroke-width="0.8" transform="rotate(65 520 95)"/>
<ellipse cx="481" cy="122" rx="5.6" ry="2.9" fill="#7a682e" stroke="#8f6f1e" stroke-opacity="0.55" stroke-width="0.8" transform="rotate(-25 481 122)"/>
<ellipse cx="451" cy="74" rx="4" ry="4.6" fill="none" stroke="#a8862a" stroke-width="2.4" transform="rotate(-25 451 74)"/>
<ellipse cx="499" cy="66" rx="4" ry="4.6" fill="none" stroke="#a8862a" stroke-width="2.4" transform="rotate(-25 499 66)"/>
<ellipse cx="685" cy="356" rx="4" ry="4.6" fill="none" stroke="#a8862a" stroke-width="2.4" transform="rotate(-25 685 356)"/>
<g transform="translate(457 388)"><path d="M-11 3 L-9 7 L1 6.5 L10.5 -1 L8.5 -7.5 L-2 -6 Z" fill="#f5a000"/><path d="M0.5 1 L8.5 -5.5 M2 3 L9.5 -3 M3 5 L10 -1 M0.5 1 L3 5 M3.5 -1.4 L6 2.6 M6.5 -3.8 L8.6 0.2" fill="none" stroke="#7a4500" stroke-width="0.9"/><path d="M-9 3.5 L-1 3.5 M-8.5 5.5 L0 5.2" stroke="#7a4500" stroke-width="0.9" stroke-dasharray="2.5 1"/></g>
</svg>
</div>
<div id="tabs">
<div class="tab" style="top:-1px;height:160px"><span style="margin-top:-5px;margin-left:1px;font-size:10.5px">Contour / Transient Animation</span></div>
<div class="tab" style="top:159px;height:107px"><span style="margin-top:1px;font-size:9.9px">Variable Edit Tree</span></div>
<div class="tab" style="top:369px;height:80px;border-top:none"><span style="margin-top:6.5px;font-size:9.9px">Results Viewer</span></div>
<div class="tab act" style="top:265px;height:104px"><span style="margin-top:1px">Property Editor</span></div>
</div>
<div id="vline"></div>
<div id="panel">
<div id="title"><span>Property Editor</span><svg style="position:absolute;left:664px;top:0" width="33" height="13" viewBox="0 0 33 13"><path d="M5.5 3 V1 H10.5 V5 H9" fill="none" stroke="#000" stroke-width="1"/><rect x="5" y="0" width="6" height="1.6" fill="#000"/><rect x="3.5" y="3" width="5" height="4.5" fill="#dadada" stroke="#000" stroke-width="1"/><rect x="3" y="2.5" width="6" height="1.8" fill="#000"/><path d="M20.5 -1 L27.5 6.5 M27.5 -1 L20.5 6.5" fill="none" stroke="#000" stroke-width="1.5"/></svg></div>
<div id="search"><span>Search</span></div>
<div class="tb" style="left:642px"><svg style="position:absolute;left:0;top:0" width="23" height="22" viewBox="0 0 23 22"><path d="M8.8 8.4 L11.4 10.6 L14 8.4 M8.8 12 L11.4 14.2 L14 12" fill="none" stroke="#3a3a55" stroke-width="1.2"/></svg></div>
<div class="tb" style="left:670px"><span style="position:absolute;left:0;width:23px;text-align:center;top:2px;font-size:21px;color:#808080;line-height:20px;transform:scaleX(0.9)">?</span></div>
<div id="tree">
<div class="row" style="top:0;height:25px"><span class="n" style="left:6px">Name</span><span class="n" style="left:112px">Value</span></div>
<div class="row" style="top:25px;height:17px"><span class="n" style="left:28px">FMU ID</span><span class="n" style="left:110px">7</span></div>
<div class="row alt" style="top:42px;height:17px"><span class="n" style="left:28px">Active</span></div>
<div class="row" style="top:59px;height:28px"><span class="n" style="left:28px;margin-top:1px">Inputs</span></div>
<div class="row alt" style="top:87px;height:28px"><span class="n" style="left:28px;margin-top:1px">Outputs</span></div>
<div class="row" style="top:115px;height:28px"></div>
<div class="row alt" style="top:143px;height:17px"><span class="n" style="left:28px">File Name</span><span class="n" style="left:110px">FMUFile</span></div>
<div class="row" style="top:160px;height:28px"><span class="n" style="left:28px;margin-top:1px;letter-spacing:-0.15px">Log File Name</span></div>
<div class="row alt" style="top:188px;height:17px"><span class="n" style="left:28px">Location</span></div>
<div class="row" style="top:205px;height:17px"><span class="n" style="left:53px">X</span><span class="n" style="left:110px;letter-spacing:-0.7px">0.807713</span></div>
<div class="row alt" style="top:222px;height:17px"><span class="n" style="left:53px">Y</span><span class="n" style="left:110px;letter-spacing:-0.7px">2.43189</span></div>
<div class="row" style="top:239px;height:17px"><span class="n" style="left:53px">Z</span><span class="n" style="left:110px;letter-spacing:-0.7px">-1.79496</span></div>
<div style="position:absolute;left:106px;top:0;width:1px;height:25px;background:#e5e5e5"></div>
<svg style="position:absolute;left:107px;top:42px" width="17" height="17" viewBox="0 0 17 17"><rect x="0.5" y="0.5" width="15" height="15" fill="#fff" stroke="#333" stroke-width="1"/><path d="M2.9 8.4 L6.3 11.6 L13.2 4.8" fill="none" stroke="#333" stroke-width="1.25"/></svg>
<svg style="position:absolute;left:5px;top:192px" width="14" height="10" viewBox="0 0 14 10"><path d="M2 2.2 L6.6 7 L11.2 2.2" fill="none" stroke="#333" stroke-width="1.9"/></svg>
<div class="btn" style="top:60px;height:26px;line-height:26px">Define Inputs</div>
<div class="btn" style="top:88px;height:26px;line-height:26px">Define Outputs</div>
<div class="btn" style="top:116px;height:26px;line-height:26px">Export</div>
<div class="btn" style="top:161px;height:26px;line-height:26px">Define</div>
</div>
</div>
</body></html>
